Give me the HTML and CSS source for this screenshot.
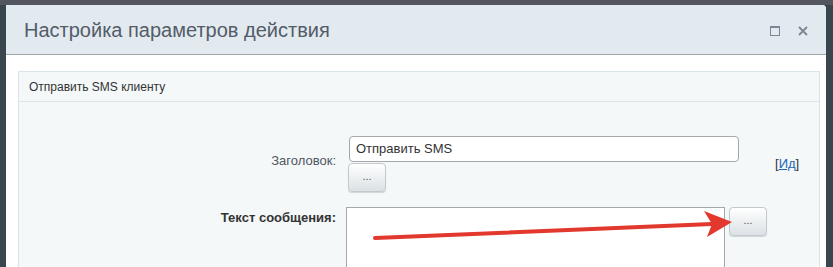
FILE: index.html
```html
<!DOCTYPE html>
<html lang="ru">
<head>
<meta charset="utf-8">
<link rel="stylesheet" href="styles.css">
</head>
<body>
<div class="dialog">
  <div class="dlg-head">
    <div class="dlg-title">Настройка параметров действия</div>
    <div class="dlg-icons">
      <svg class="ico" width="10" height="10" viewBox="0 0 10 10"><rect x="0.5" y="0.5" width="9" height="9" fill="none" stroke="#7b8694" stroke-width="1"/><rect x="0" y="0" width="10" height="2" fill="#7b8694"/></svg>
      <svg class="ico" width="10" height="10" viewBox="0 0 10 10"><path d="M1 1 L9 9 M9 1 L1 9" stroke="#7b8694" stroke-width="1.8"/></svg>
    </div>
  </div>
  <div class="dlg-body">
    <div class="panel">
      <div class="panel-head">Отправить SMS клиенту</div>
      <div class="form">
        <div class="row row-title">
          <div class="label">Заголовок:</div>
          <div class="field">
            <div class="input">Отправить SMS</div>
            <div class="btn">...</div>
          </div>
          <div class="extra"><span class="br">[</span><a class="link">Ид</a><span class="br">]</span></div>
        </div>
        <div class="row row-text">
          <div class="label bold">Текст сообщения:</div>
          <div class="field field-text">
            <div class="textarea"></div>
            <div class="btn">...</div>
          </div>
        </div>
      </div>
    </div>
  </div>
</div>
<svg class="arrow" width="833" height="267" viewBox="0 0 833 267">
  <path d="M375 238 L712 224" stroke="#e2382d" stroke-width="4" stroke-linecap="round" fill="none"/>
  <path d="M704 211 L732 222 L707 237 L712 224 Z" fill="#e2382d"/>
</svg>
</body>
</html>
```
FILE: styles.css
```css
html, body {
  margin: 0;
  padding: 0;
}
body {
  background: #3a464e;
  font-family: "Liberation Sans", Arial, sans-serif;
  width: 833px;
  height: 267px;
  overflow: hidden;
  position: relative;
  border-top: 5px solid #53575d;
  box-sizing: border-box;
}
.dialog {
  margin: 0 7px 0 6px;
  background: #fff;
  border-top-right-radius: 4px;
  height: 262px;
}
.dlg-head {
  height: 49px;
  background: #e3eaef;
  border-bottom: 1px solid #a1a6a9;
  border-top-right-radius: 4px;
  display: flex;
  align-items: center;
  padding: 0 18px 0 18px;
}
.dlg-title {
  flex: 1;
  font-size: 20px;
  color: #535c69;
  padding-top: 1px;
}
.dlg-icons {
  display: flex;
  gap: 18px;
  align-items: center;
  padding-top: 2px;
}
.ico { display: block; }
.dlg-body {
  padding: 16px 6px 0 12px;
}
.panel {
  border: 1px solid #dbe5e9;
  background: #f4f8f9;
  height: 200px;
}
.panel-head {
  height: 29px;
  border-bottom: 1px solid #dbe5e9;
  font-size: 12px;
  color: #333;
  line-height: 31px;
  padding-left: 10px;
}
.form {
  padding-top: 34px;
}
.row {
  display: grid;
  grid-template-columns: 317px 1fr 56px;
  column-gap: 13px;
}
.row-title {
  align-items: center;
}
.label {
  text-align: right;
  font-size: 13px;
  color: #4f5560;
  white-space: nowrap;
}
.row-title .label {
  margin-top: -8px;
}
.bold {
  font-weight: bold;
  color: #333;
}
.field {
  display: flex;
  flex-direction: column;
  align-items: flex-start;
}
.input {
  box-sizing: border-box;
  width: 390px;
  height: 26px;
  border: 1px solid #a3a8ad;
  border-radius: 4px;
  background: #fff;
  font-size: 13px;
  color: #333;
  line-height: 24px;
  padding-left: 6px;
}
.btn {
  box-sizing: border-box;
  width: 38px;
  height: 29px;
  border: 1px solid #c3cacd;
  border-radius: 4px;
  background: linear-gradient(#ffffff, #dbe1e4);
  box-shadow: 0 1px 1px rgba(0,0,0,0.15);
  font-size: 11px;
  color: #555;
  text-align: center;
  line-height: 24px;
  margin-left: -1px;
  margin-top: 1px;
}
.extra {
  font-size: 13px;
  color: #333;
  margin-top: -1px;
  padding-left: 12px;
}
.link {
  color: #2067b0;
  text-decoration: underline;
}
.row-text {
  margin-top: 15px;
  align-items: start;
}
.row-text .label {
  padding-top: 3px;
}
.field-text {
  flex-direction: row;
  gap: 4px;
  margin-left: -3px;
}
.textarea {
  box-sizing: border-box;
  width: 379px;
  height: 70px;
  border: 1px solid #a3a8ad;
  border-bottom: none;
  background: #fff;
}
.field-text .btn {
  margin: 0;
}
.arrow {
  position: absolute;
  left: 0;
  top: -5px;
  pointer-events: none;
}
```
